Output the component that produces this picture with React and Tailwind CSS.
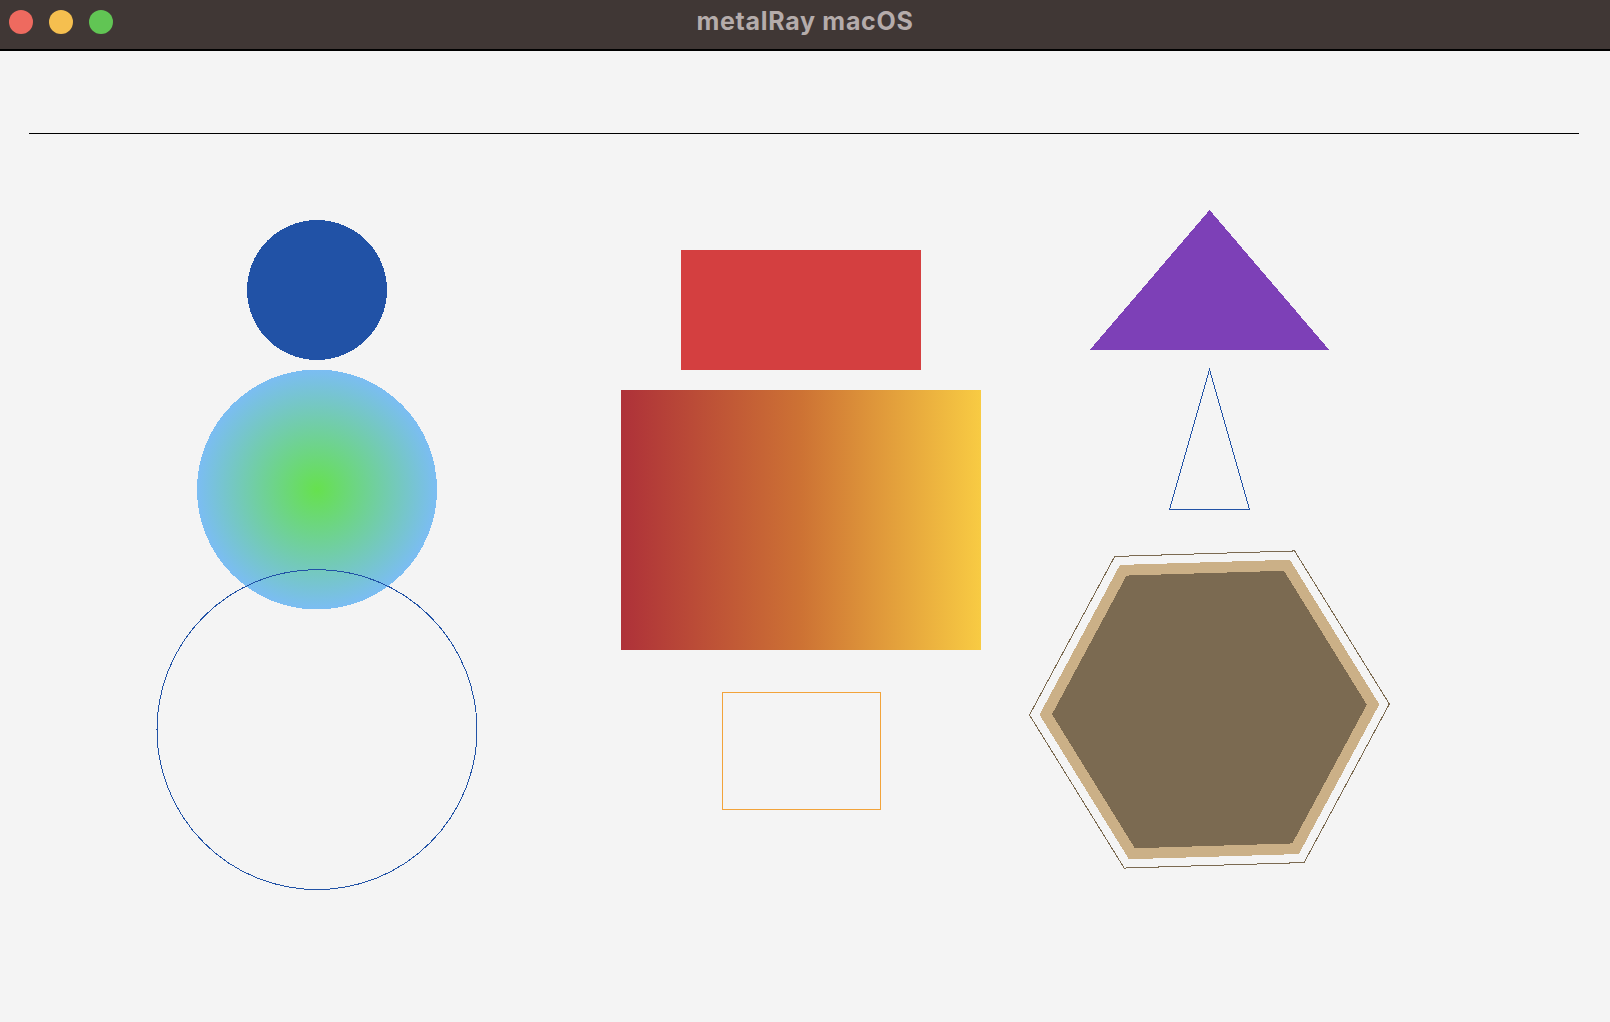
function hexPoints(cx, cy, r, rotDeg) {
  return Array.from({ length: 6 }, (_, k) => {
    const a = ((rotDeg + k * 60) * Math.PI) / 180;
    return `${(cx + r * Math.cos(a)).toFixed(2)},${(cy + r * Math.sin(a)).toFixed(2)}`;
  }).join(" ");
}

const HEX = { cx: 1209.4, cy: 709.5, rot: -1.75 };

function TitleBar() {
  return (
    <div className="h-[51px] shrink-0 grid grid-cols-[1fr_auto_1fr] items-start bg-[#403735] border-b-2 border-black">
      <div className="flex items-center gap-[16px] pl-[9px] pt-[10px]">
        <span className="block w-[24px] h-[24px] rounded-full bg-[#ee6a5f]" />
        <span className="block w-[24px] h-[24px] rounded-full bg-[#f5bf4f]" />
        <span className="block w-[24px] h-[24px] rounded-full bg-[#61c554]" />
      </div>
      <div
        className="pt-[9px] leading-[25px] text-[25px] font-bold tracking-[0.7px] text-[#b5acab]"
        style={{ fontFamily: "Inter, 'Liberation Sans', sans-serif" }}
      >
        metalRay macOS
      </div>
      <div />
    </div>
  );
}

function Canvas() {
  return (
    <svg
      width="1610"
      height="971"
      viewBox="0 51 1610 971"
      className="block"
      shapeRendering="crispEdges"
    >
      <defs>
        <radialGradient id="skyGreen" cx="0.5" cy="0.5" r="0.5">
          <stop offset="0" stopColor="#66e14e" />
          <stop offset="1" stopColor="#7bbdf3" />
        </radialGradient>
        <linearGradient id="maroonGold" x1="0" y1="0" x2="1" y2="0">
          <stop offset="0" stopColor="#ae3139" />
          <stop offset="0.5" stopColor="#cd7234" />
          <stop offset="1" stopColor="#f8cb43" />
        </linearGradient>
      </defs>

      <line x1="29" y1="133.5" x2="1579" y2="133.5" stroke="#000" strokeWidth="1" />

      {/* circles */}
      <circle cx="317" cy="290" r="70" fill="#2152a6" />
      <circle cx="317" cy="489.5" r="120" fill="url(#skyGreen)" />
      <circle cx="317" cy="729.6" r="160" fill="none" stroke="#2152a6" strokeWidth="1" />

      {/* rectangles */}
      <rect x="681" y="250" width="240" height="120" fill="#d43f40" />
      <rect x="621" y="390" width="360" height="260" fill="url(#maroonGold)" />
      <rect x="722.5" y="692.5" width="158" height="117" fill="none" stroke="#f2a33a" strokeWidth="1" />

      {/* triangles */}
      <polygon points="1209.6,210 1090,349.7 1329,349.7" fill="#7d40b7" />
      <polygon
        points="1209.5,369.5 1169.5,509.5 1249.5,509.5"
        fill="none"
        stroke="#2152a6"
        strokeWidth="1"
      />

      {/* hexagon */}
      <polygon points={hexPoints(HEX.cx, HEX.cy, 170, HEX.rot)} fill="#cbb087" />
      <polygon points={hexPoints(HEX.cx, HEX.cy, 157.5, HEX.rot)} fill="#7b6a51" />
      <polygon
        points={hexPoints(HEX.cx, HEX.cy, 180, HEX.rot)}
        fill="none"
        stroke="#7b6a51"
        strokeWidth="1"
      />
    </svg>
  );
}

export default function App() {
  return (
    <div className="w-[1610px] h-[1022px] flex flex-col overflow-hidden bg-[#f4f4f4]">
      <TitleBar />
      <div className="flex-1">
        <Canvas />
      </div>
    </div>
  );
}
